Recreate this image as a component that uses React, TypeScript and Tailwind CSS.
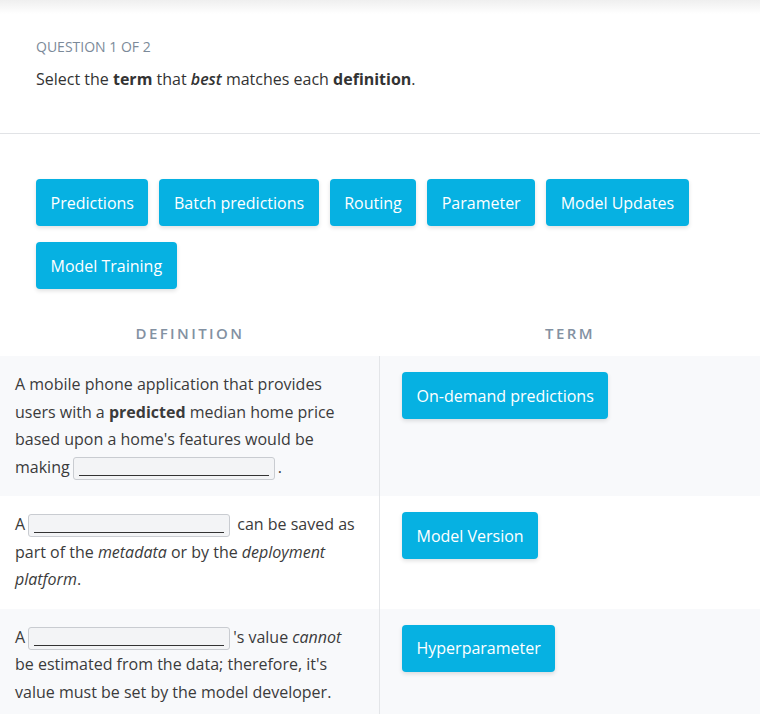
import { ReactNode } from 'react';

const bank = ['Predictions', 'Batch predictions', 'Routing', 'Parameter', 'Model Updates', 'Model Training'];

const Chip = ({ children }: { children: ReactNode }) => (
  <div className="inline-flex h-[47px] items-center rounded-[4px] bg-[#06b1e2] px-[14.5px] text-[16px] text-white shadow-[0_2px_4px_rgba(0,0,0,0.12)]">
    {children}
  </div>
);

const Blank = () => (
  <span className="mx-[3px] inline-flex h-[23px] w-[202px] items-end rounded-[3px] border border-[#c9ccd1] bg-[#f3f4f6] px-[5px] pb-[3px] align-middle">
    <span className="block h-px w-full bg-[#333]"></span>
  </span>
);

interface RowProps {
  definition: ReactNode;
  term: string;
  shaded?: boolean;
}

const Row = ({ definition, term, shaded }: RowProps) => (
  <div className={`grid grid-cols-2 ${shaded ? 'bg-[#f8f9fb]' : 'bg-white'}`}>
    <div className="border-r border-[#e3e5e8] pb-[15px] pl-[15px] pr-[22px] pt-[15px] text-[16px] leading-[27.5px] text-[#3b3b3b]">
      {definition}
    </div>
    <div className="pl-[22px] pt-[16px]">
      <Chip>{term}</Chip>
    </div>
  </div>
);

const App = () => {
  return (
    <div className="min-h-screen bg-white font-['Open_Sans',sans-serif]">
      <div className="h-[14px] bg-linear-to-b from-[#efefef] to-white"></div>
      <div className="px-9 pb-[42px] pt-[23px]">
        <div className="text-[14px] leading-5 text-[#7c8a99]">QUESTION 1 OF 2</div>
        <p className="mt-[10px] text-[16px] leading-6 text-[#333]">
          Select the <b>term</b> that <i className="font-semibold">best</i> matches each <b>definition</b>.
        </p>
      </div>
      <div className="h-px bg-[#e1e3e6]"></div>

      <div className="flex flex-wrap gap-x-[11px] gap-y-4 px-9 pt-[45px]">
        {bank.map((b) => (
          <Chip key={b}>{b}</Chip>
        ))}
      </div>

      <div className="grid grid-cols-2 pb-[13px] pt-[34px] text-center text-[15px] font-semibold leading-5 tracking-[2.4px] text-[#8391a2]">
        <div>DEFINITION</div>
        <div>TERM</div>
      </div>

      <Row
        shaded
        term="On-demand predictions"
        definition={
          <>
            A mobile phone application that provides users with a <b>predicted</b> median home price based upon a
            home's features would be making
            <Blank />.
          </>
        }
      />
      <Row
        term="Model Version"
        definition={
          <>
            A<Blank /> can be saved as part of the <i>metadata</i> or by the <i>deployment platform</i>.
          </>
        }
      />
      <Row
        shaded
        term="Hyperparameter"
        definition={
          <>
            A<Blank />
            's value <i>cannot</i> be estimated from the data; therefore, it's value must be set by the model
            developer.
          </>
        }
      />
    </div>
  );
};

export default App;
